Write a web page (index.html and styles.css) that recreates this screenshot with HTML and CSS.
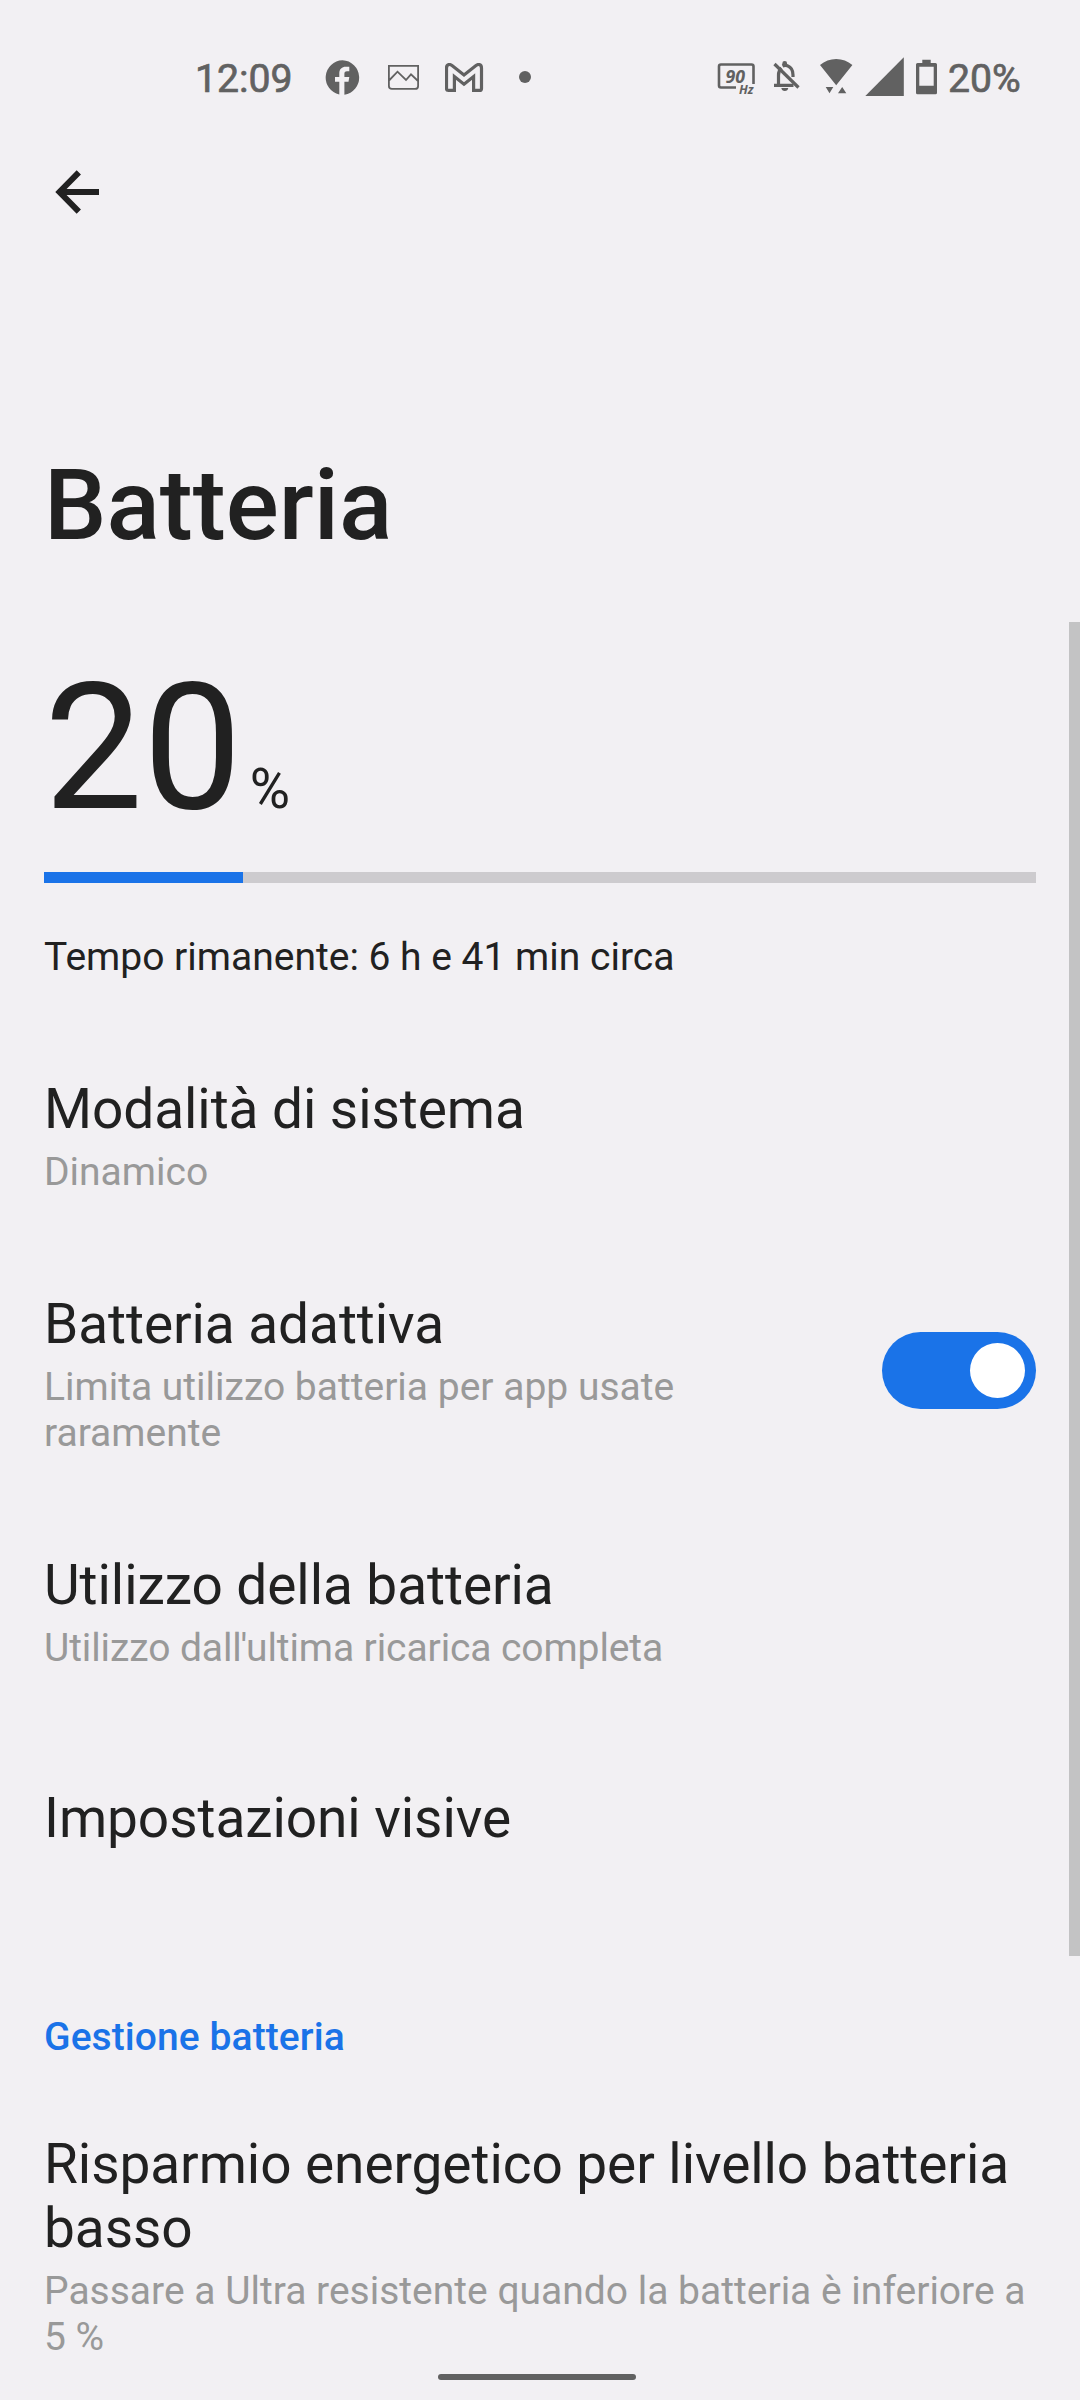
FILE: index.html
```html
<!DOCTYPE html>
<html lang="it">
<head>
<meta charset="utf-8">
<title>Batteria</title>
<link rel="stylesheet" href="styles.css">
</head>
<body>
<div class="screen">
  <header class="status">
    <div class="status-left">
      <span class="clock">12:09</span>
      <svg class="icon facebook" width="35" height="35" viewBox="0 0 35 35"><path fill="currentColor" d="M17.5.3A17.3 17.3 0 0 0 14.3 34.5V21.8H10V17h4.3v-3.8C14.300 9 17 6.700 20.700 6.700h3.600V11.300H22c-2 0-2.600 1-2.600 2.500V17h4.900l-.8 4.800h-4.100V34.700A17.300 17.300 0 0 0 17.500.3z"/></svg>
      <svg class="icon image" width="31" height="25" viewBox="0 0 31 25"><path d="M.9.9h29.200v20q0 3-3 3H3.900q-3 0-3-3zM1 15.500L9.500 6.700l8.500 8.300 5-5.700 7 6.700"/></svg>
      <svg class="icon gmail" width="39" height="29" viewBox="0 0 39 29"><path d="M3.500 27.400Q1.500 27.400 1.500 25.400V5Q1.500 1.500 4.600 1.500 5.600 1.500 7 2.600L19 12 31 2.600Q32.400 1.500 33.400 1.500 36.500 1.500 36.500 5V25.400Q36.500 27.400 34.500 27.400H28.600V13.500L19 21.300 9.400 13.500V27.400z"/></svg>
      <span class="icon dot"></span>
    </div>
    <div class="status-right">
      <svg class="icon hertz" width="38" height="40" viewBox="0 0 38 40"><path d="M19 30.500H4q-2 0-2-2V9.500q0-2 2-2h30.500q2 0 2 2V27"/><text x="8.500" y="25.500" font-size="17" textLength="19.500" lengthAdjust="spacingAndGlyphs">90</text><text x="22" y="36.500" font-size="11.500" textLength="14.500" lengthAdjust="spacingAndGlyphs">Hz</text></svg>
      <svg class="icon bell" width="27" height="40" viewBox="0 0 27 40"><path d="M1 28.300h19.500M5.500 28V18q0-4 3-7M9.500 9Q12 7.700 14.500 8.800 20 11 20 18v2"/><path d="M1.500 7l24 23.500"/><path class="solid" d="M9.300 8V6.500a2.400 2.400 0 0 1 4.800 0V8zM8.300 31h7q-.5 3-3.500 3t-3.500-3z"/></svg>
      <svg class="icon wifi" width="33" height="40" viewBox="0 0 33 40"><path class="solid" d="M0 8Q7 2 16.200 2t16.200 6L16.200 28.300zM5.700 30h7.600l-3.800 6.300zM18 36.300h8.300L22.200 30z"/></svg>
      <svg class="icon signal" width="39" height="40" viewBox="0 0 39 40"><path class="solid" d="M.3 39H38.800V.3z"/></svg>
      <svg class="icon battery" width="23" height="40" viewBox="0 0 23 40"><path class="solid" fill-rule="evenodd" d="M7.300 2.700h8.400V6H20.500q1.500 0 1.500 1.500v28.300q0 1.500-1.500 1.500h-18Q1 37.300 1 35.800V7.500Q1 6 2.500 6h4.800zM4.300 9.700v19h14.400v-19z"/></svg>
      <span class="battery-text">20%</span>
    </div>
  </header>
  <nav class="toolbar"><svg class="back" width="46" height="44" viewBox="0 0 46 44"><path d="M25.800 2.300L6.500 22l19.300 19.700M7 22h39"/></svg></nav>
  <h1 class="title">Batteria</h1>
  <section class="level"><span class="number">20</span><span class="percent">%</span></section>
  <div class="bar"><div class="fill"></div></div>
  <p class="remaining">Tempo rimanente: 6 h e 41 min circa</p>
  <main class="list">
    <section class="item mode"><h2>Modalità di sistema</h2><p>Dinamico</p></section>
    <section class="item adaptive"><div><h2>Batteria adattiva</h2><p>Limita utilizzo batteria per app usate<br>raramente</p></div><span class="switch"></span></section>
    <section class="item usage"><h2>Utilizzo della batteria</h2><p>Utilizzo dal<span class="elision">l'</span>ultima ricarica completa</p></section>
    <section class="item visual"><h2>Impostazioni visive</h2></section>
    <h3 class="group">Gestione batteria</h3>
    <section class="item saver"><h2>Risparmio energetico per livello batteria<br>basso</h2><p>Passare a Ultra resistente quando la batteria è inferiore a<br>5 %</p></section>
  </main>
  <div class="scrollbar"></div>
  <div class="home"></div>
</div>
</body>
</html>
```
FILE: styles.css
```css
* { box-sizing: border-box; margin: 0; padding: 0; }
body { background: #f2f0f3; font-family: Roboto, sans-serif; color: #212121; }
.screen { position: relative; width: 1080px; height: 2400px; overflow: hidden; padding: 0 44px; display: flex; flex-direction: column; }
.status { height: 152px; margin: 0 -44px; padding: 5px 60px 0 195px; display: flex; align-items: center; justify-content: space-between; color: #616161; font-size: 39.200px; -webkit-text-stroke: 0.7px currentColor; }
.status-left, .status-right { display: flex; align-items: center; }
.clock { width: 98px; }
.icon { margin-bottom: 3px; flex: none; fill: none; stroke: currentColor; }
.icon .solid { fill: currentColor; stroke: none; }
.facebook { margin-left: 32px; stroke: none; }
.image { margin-left: 28px; stroke-width: 1.800; }
.gmail { margin-left: 26px; stroke-width: 3.200; }
.dot { width: 12px; height: 12px; border-radius: 50%; background: #616161; margin-left: 35px; }
.hertz { stroke-width: 2.600; }
.hertz text { font-family: "Open Sans", sans-serif; font-weight: 700; font-style: italic; fill: currentColor; stroke: none; -webkit-text-stroke: 0; }
.bell { margin-left: 18px; stroke-width: 3.200; }
.wifi { margin-left: 20px; }
.signal { margin-left: 12px; }
.battery { margin-left: 11px; }
.battery-text { margin-left: 10px; width: 72px; }
.toolbar { height: 80px; display: flex; align-items: center; padding-left: 9px; }
.back { fill: none; stroke: #212121; stroke-width: 6; }
.title { font-size: 99px; line-height: 112px; font-weight: 500; margin-top: 217px; }
.level { display: flex; align-items: baseline; height: 212px; margin-top: 81px; line-height: 212px; }
.number { font-size: 176px; }
.percent { font-size: 55px; margin-left: 8px; }
.bar { height: 11px; background: #cdcbce; margin-top: 18px; }
.fill { height: 11px; width: 199px; background: #1a73e8; }
.remaining { font-size: 39px; line-height: 46px; margin-top: 51px; }
.item h2 { font-size: 55px; line-height: 64px; font-weight: 400; letter-spacing: -0.07px; }
.item p { font-size: 39px; line-height: 46px; color: #999; margin-top: 8px; }
.usage p { letter-spacing: -0.1px; }
.item .elision { letter-spacing: -1.300px; }
.mode { margin-top: 97px; }
.adaptive { margin-top: 97px; display: flex; justify-content: space-between; align-items: center; }
.usage { margin-top: 97px; }
.visual { margin-top: 115px; }
.switch { width: 154px; height: 77px; margin-bottom: 7px; border-radius: 39px; background: #1a73e8; padding: 11px; display: flex; justify-content: flex-end; }
.switch::after { content: ""; width: 55px; height: 55px; border-radius: 50%; background: #fff; }
.group { font-size: 39px; line-height: 46px; font-weight: 500; color: #1a73e8; margin-top: 164px; letter-spacing: 0.080px; }
.saver { margin-top: 72px; }
.scrollbar { position: absolute; left: 1069px; top: 622px; width: 11px; height: 1334px; background: #c3c3c4; }
.home { position: absolute; left: 438px; top: 2374px; width: 198px; height: 6px; border-radius: 3px; background: #616161; }
```
